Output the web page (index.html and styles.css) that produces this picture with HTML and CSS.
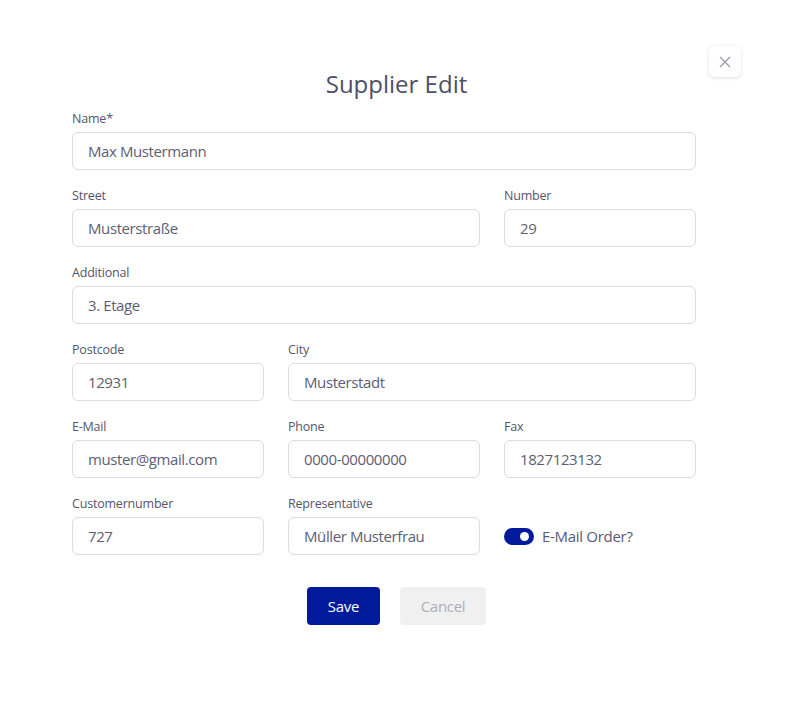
FILE: index.html
```html
<!DOCTYPE html>
<html>
<head>
<meta charset="utf-8">
<link rel="stylesheet" href="styles.css">
</head>
<body>
<div class="modal">
  <button class="close" aria-label="Close">
    <svg width="12" height="12" viewBox="0 0 12 12"><path d="M1 1L11 11M11 1L1 11" stroke="#9a9aaa" stroke-width="1.3" fill="none"/></svg>
  </button>
  <h1 class="title">Supplier Edit</h1>
  <form class="form">
    <div class="field span3"><label>Name*</label><div class="input">Max Mustermann</div></div>
    <div class="field span2"><label>Street</label><div class="input">Musterstraße</div></div>
    <div class="field"><label>Number</label><div class="input">29</div></div>
    <div class="field span3"><label>Additional</label><div class="input">3. Etage</div></div>
    <div class="field"><label>Postcode</label><div class="input">12931</div></div>
    <div class="field span2"><label>City</label><div class="input">Musterstadt</div></div>
    <div class="field"><label>E-Mail</label><div class="input">muster@gmail.com</div></div>
    <div class="field"><label>Phone</label><div class="input">0000-00000000</div></div>
    <div class="field"><label>Fax</label><div class="input">1827123132</div></div>
    <div class="field"><label>Customernumber</label><div class="input">727</div></div>
    <div class="field"><label>Representative</label><div class="input">Müller Musterfrau</div></div>
    <div class="field toggle-field">
      <span class="toggle"><span class="knob"></span></span>
      <span class="toggle-label">E-Mail Order?</span>
    </div>
  </form>
  <div class="actions">
    <button class="btn save">Save</button>
    <button class="btn cancel">Cancel</button>
  </div>
</div>
</body>
</html>
```
FILE: styles.css
```css
* { box-sizing: border-box; }
html, body { margin: 0; padding: 0; background: #fff; }
body {
  font-family: "Open Sans", "Noto Sans", sans-serif;
  color: #5a5a70;
  width: 793px;
  height: 710px;
}
.modal {
  position: relative;
  width: 793px;
  padding-top: 66px;
}
.close {
  position: absolute;
  top: 46px;
  left: 709px;
  width: 32px;
  height: 31px;
  border: none;
  border-radius: 6px;
  background: #fff;
  box-shadow: 0 1px 4px rgba(0,0,0,0.12);
  display: flex;
  align-items: center;
  justify-content: center;
  padding: 0;
}
.title {
  margin: 0;
  text-align: center;
  font-weight: 400;
  font-size: 24px;
  line-height: 36px;
  color: #4f4f66;
  letter-spacing: 0;
}
.form {
  display: grid;
  grid-template-columns: repeat(3, 192px);
  column-gap: 24px;
  row-gap: 17px;
  width: 624px;
  margin: 8px 0 0 72px;
}
.span2 { grid-column: span 2; }
.span3 { grid-column: span 3; }
.field { display: flex; flex-direction: column; }
.field label {
  font-size: 12.5px;
  line-height: 18px;
  color: #55556b;
  margin-bottom: 4px;
  letter-spacing: -0.2px;
}
.input {
  height: 38px;
  border: 1px solid #dcdce0;
  border-radius: 6px;
  padding: 0 15px;
  display: flex;
  align-items: center;
  font-size: 15px;
  color: #5e5e76;
  letter-spacing: -0.4px;
}
.toggle-field {
  flex-direction: row;
  align-items: center;
  align-self: end;
  height: 38px;
  gap: 8px;
}
.toggle {
  width: 30px;
  height: 17px;
  border-radius: 9px;
  background: #001a9c;
  position: relative;
  display: inline-block;
}
.knob {
  position: absolute;
  top: 4px;
  right: 5px;
  width: 9px;
  height: 9px;
  border-radius: 50%;
  background: #fff;
}
.toggle-label {
  font-size: 15px;
  color: #5a5a72;
  letter-spacing: -0.3px;
}
.actions {
  display: flex;
  justify-content: center;
  gap: 20px;
  margin-top: 32px;
}
.btn {
  height: 38px;
  border: none;
  border-radius: 4px;
  font-family: inherit;
  font-size: 15px;
  letter-spacing: -0.3px;
  padding: 0;
}
.save { width: 73px; background: #001a9c; color: #fff; }
.cancel { width: 86px; background: #f0f0f0; color: #aeaeb8; }
```
